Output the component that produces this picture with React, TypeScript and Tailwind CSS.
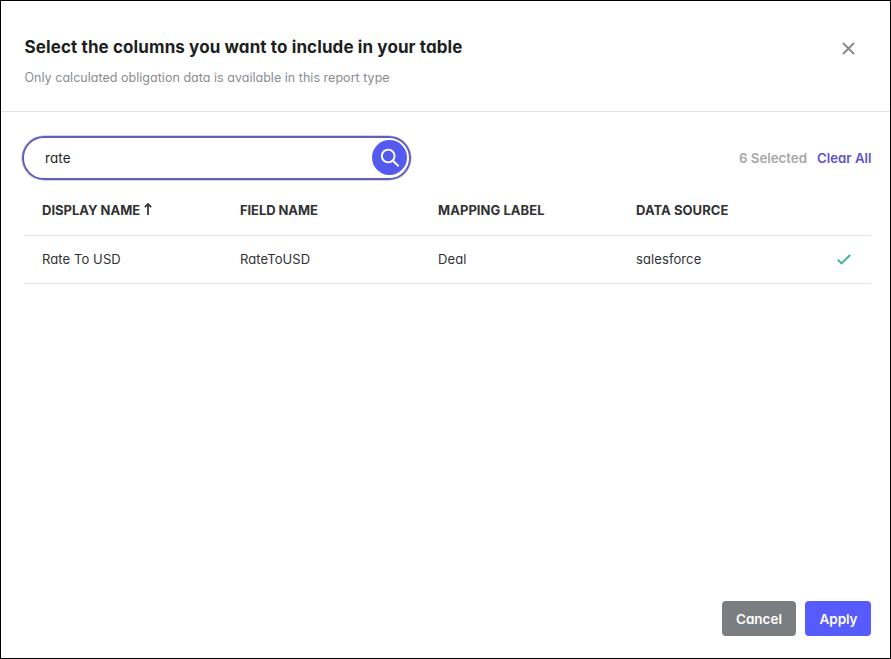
import { useState } from "react";

const columns = [
  { name: "DISPLAY NAME", tracking: "" },
  { name: "FIELD NAME", tracking: "tracking-[-0.08px]" },
  { name: "MAPPING LABEL", tracking: "tracking-[0.05px]" },
  { name: "DATA SOURCE", tracking: "tracking-[0.05px]" },
];
const rows = [["Rate To USD", "RateToUSD", "Deal", "salesforce"]];

function CloseIcon() {
  return (
    <svg width="13" height="13" viewBox="0 0 13 13" fill="none" stroke="#858788" strokeWidth="1.8">
      <path d="M1 1 12 12M12 1 1 12" />
    </svg>
  );
}

function SearchIcon() {
  return (
    <svg width="20" height="20" viewBox="0 0 20 20" fill="none" stroke="#fff" strokeWidth="1.9" strokeLinecap="round">
      <circle cx="8.2" cy="8" r="6.4" />
      <path d="m12.9 12.7 5.3 5.1" />
    </svg>
  );
}

function SortIcon() {
  return (
    <svg width="8" height="13" viewBox="0 0 8 13" fill="none" stroke="#303234" strokeWidth="1.7">
      <path d="M4 12V1.2M.8 4.2 4 1l3.2 3.2" />
    </svg>
  );
}

function CheckIcon() {
  return (
    <svg width="14" height="11" viewBox="0 0 14 11" fill="none" stroke="#36b592" strokeWidth="1.8">
      <path d="m.8 5.7 3.7 3.8L13.2 1" />
    </svg>
  );
}

export default function App() {
  const [query, setQuery] = useState("rate");
  return (
    <div className="flex h-[659px] w-[891px] flex-col border border-black bg-white font-['Inter',sans-serif] text-[#303234] [font-feature-settings:'cv11']">
      <header className="flex h-[111px] shrink-0 items-start justify-between border-b border-[#dedfe0] pr-[35px] pl-[23.5px]">
        <div>
          <h1 className="mt-[34px] text-[17px] leading-6 font-bold tracking-[0.11px] whitespace-nowrap text-[#1d1f20]">
            Select the columns you want to include in your table
          </h1>
          <p className="mt-[9px] text-[12.5px] leading-5 tracking-[0.03px] whitespace-nowrap text-[#8a8d8f]">
            Only calculated obligation data is available in this report type
          </p>
        </div>
        <button aria-label="Close" className="mt-[41px]">
          <CloseIcon />
        </button>
      </header>

      <div className="flex items-center justify-between pt-6 pr-[18.5px] pl-[21px]">
        <div className="flex h-11 w-[389px] items-center rounded-full border-2 border-[#625fb8] pr-0.5 pl-[21px] shadow-[0_0_0_0.5px_#a9a8dc]">
          <input
            aria-label="Search columns"
            value={query}
            onChange={(e) => setQuery(e.target.value)}
            className="min-w-0 flex-1 text-[13.5px] tracking-[0.1px] text-[#222425] outline-none"
          />
          <button aria-label="Search" className="mb-px flex size-[35px] items-center justify-center rounded-full bg-[#545af0]">
            <SearchIcon />
          </button>
        </div>
        <div className="flex gap-2.5 pt-0.5 text-[13.25px] font-semibold whitespace-nowrap">
          <span className="text-[#a5a8a9]">6 Selected</span>
          <button className="text-[#5b55ce]">Clear All</button>
        </div>
      </div>

      <div className="mr-[19px] ml-[23px] text-[13px]">
        <div className="flex h-14 items-center border-b border-[#e2e3e4] pt-1.5 pl-[18px] font-bold">
          {columns.map(({ name, tracking }, i) => (
            <div key={name} className={`flex w-[198px] items-center gap-1 whitespace-nowrap ${tracking}`}>
              <span>{name}</span>
              {i === 0 && (
                <span className="mb-0.5">
                  <SortIcon />
                </span>
              )}
            </div>
          ))}
        </div>
        {rows.map((row) => (
          <div key={row[0]} className="flex h-12 items-center border-b border-[#e2e3e4] pl-[18px] tracking-[0.1px]">
            {row.map((cell) => (
              <div key={cell} className="w-[198px] whitespace-nowrap">
                <span>{cell}</span>
              </div>
            ))}
            <div className="pl-[3px]">
              <CheckIcon />
            </div>
          </div>
        ))}
      </div>

      <footer className="mt-auto mr-[19px] mb-[22px] flex justify-end gap-[9px] text-[13.5px] font-semibold text-white">
        <button className="h-[35px] w-[74px] rounded-[4px] bg-[#7b7e80] pt-0.5">Cancel</button>
        <button className="h-[35px] w-[66px] rounded-[4px] bg-[#575bfe] pt-0.5 pl-px tracking-[-0.1px]">Apply</button>
      </footer>
    </div>
  );
}
